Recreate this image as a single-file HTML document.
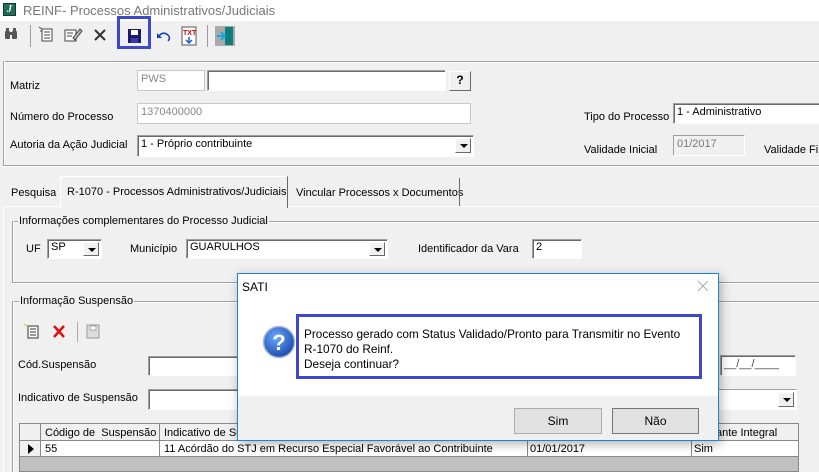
<!DOCTYPE html>
<html><head><meta charset="utf-8"><style>
*{margin:0;padding:0;box-sizing:border-box}
body{width:819px;height:472px;overflow:hidden;background:#f0f0f0;font-family:"Liberation Sans",sans-serif;font-size:11px;color:#000;position:relative}
.a{position:absolute;white-space:nowrap}
.in{position:absolute;background:#fff;border:1px solid;border-color:#a0a0a0 #fff #fff #a0a0a0;box-shadow:inset 1px 1px 0 #696969;padding:1px 3px;font-size:11px;line-height:15px}
.dd{position:absolute;right:2px;top:2px;width:16px;height:15px;background:#f0f0f0;border:1px solid;border-color:#fff #696969 #696969 #fff}
.dd:after{content:"";position:absolute;left:4px;top:5px;border:4px solid transparent;border-top:4px solid #000;border-bottom:0}
.hl{position:absolute;height:2px;border-top:1px solid #a0a0a0;border-bottom:1px solid #fff}
.vl{position:absolute;width:2px;border-left:1px solid #a0a0a0;border-right:1px solid #fff}
.btn{position:absolute;background:#e1e1e1;border:1px solid #adadad;text-align:center;font-size:12px}
</style></head><body>
<div class="a" style="left:0;top:0;width:819px;height:21px;background:#fff"></div>
<div class="a" style="left:3px;top:3px;width:13px;height:13px;background:#1f6e5a;border:1px solid #0c3d30;color:#fff;font:bold italic 10px 'Liberation Serif';text-align:center;line-height:11px">J</div>
<div class="a" style="left:23px;top:3px;font-size:13px;color:#777">REINF- Processos Administrativos/Judiciais</div>

<!-- toolbar -->
<svg class="a" style="left:0;top:22px" width="250" height="30">
<g fill="#555"><rect x="5" y="9" width="5" height="8" rx="1"/><rect x="12" y="9" width="5" height="8" rx="1"/><rect x="6" y="6" width="3" height="4"/><rect x="13" y="6" width="3" height="4"/><rect x="9" y="10" width="4" height="3"/></g>
<line x1="30.5" y1="3" x2="30.5" y2="25" stroke="#999"/>
<g fill="none" stroke="#444"><rect x="42" y="7" width="10" height="12" fill="#fff"/><path d="M44 10h6M44 13h6M44 16h6"/><path d="M39 5l3 2M40 9h2"/></g>
<g fill="none" stroke="#444"><rect x="65" y="8" width="11" height="11" fill="#fff"/><path d="M67 11h6M67 14h5"/><path d="M73 16l7-9 2 2-7 9z" fill="#bbb"/></g>
<path d="M95 8l10 10M105 8l-10 10" stroke="#333" stroke-width="2"/>
<rect x="128" y="7" width="13" height="14" fill="#1a1a6e"/><rect x="131" y="8" width="7" height="5" fill="#fff"/><rect x="131" y="16" width="7" height="5" fill="#3a3aaa"/>
<path d="M159 14q4-5 9-1 3 3 0 6" fill="none" stroke="#1540b0" stroke-width="1.5"/><path d="M157 11v5h5z" fill="#1540b0"/>
<rect x="182" y="5" width="14" height="18" fill="#fff" stroke="#555"/><text x="183" y="13" font-size="7" font-weight="bold" fill="#c00" font-family="Liberation Sans">TXT</text><path d="M189 15v5M186 18l3 3 3-3" stroke="#1a5fd0" fill="none" stroke-width="1.5"/>
<line x1="207.5" y1="3" x2="207.5" y2="25" stroke="#999"/>
<rect x="215" y="4" width="20" height="20" fill="#aaa"/><rect x="225" y="5" width="8" height="18" fill="#0a7f7f"/><path d="M217 14h7M221 10l4 4-4 4" stroke="#1ad" fill="none" stroke-width="2"/>
</svg>
<div class="a" style="left:117px;top:16px;width:34px;height:33px;border:3px solid #3f48cc"></div>

<!-- top panel -->
<div class="hl" style="left:3px;top:61px;width:816px"></div>
<div class="vl" style="left:3px;top:61px;height:106px"></div>
<div class="hl" style="left:3px;top:165px;width:816px"></div>
<div class="a" style="left:10px;top:80px">Matriz</div>
<div class="in" style="left:137px;top:70px;width:68px;height:21px;color:#888;box-shadow:none;border-color:#c8c8c8">PWS</div>
<div class="in" style="left:207px;top:70px;width:239px;height:21px"></div>
<div class="btn" style="left:449px;top:71px;width:22px;height:20px;font-weight:bold;background:#f0f0f0;border-color:#fff #696969 #696969 #fff;line-height:17px">?</div>
<div class="a" style="left:10px;top:111px">Número do Processo</div>
<div class="in" style="left:137px;top:103px;width:334px;height:21px;color:#888;box-shadow:none;border-color:#c8c8c8">1370400000</div>
<div class="a" style="left:10px;top:139px">Autoria da Ação Judicial</div>
<div class="in" style="left:137px;top:135px;width:337px;height:22px">1 - Próprio contribuinte<div class="dd"></div></div>
<div class="a" style="left:584px;top:111px">Tipo do Processo</div>
<div class="in" style="left:673px;top:103px;width:150px;height:21px">1 - Administrativo</div>
<div class="a" style="left:584px;top:144px">Validade Inicial</div>
<div class="in" style="left:673px;top:135px;width:72px;height:21px;background:#f0f0f0;color:#777;box-shadow:none;border-color:#a0a0a0 #fff #fff #a0a0a0">01/2017</div>
<div class="a" style="left:764px;top:144px">Validade Fin</div>

<!-- tabs -->
<div class="a" style="left:11px;top:187px">Pesquisa</div>
<div class="a" style="left:60px;top:176px;width:228px;height:32px;border-left:1px solid #fff;border-top:1px solid #fff;border-right:1px solid #696969;background:#f0f0f0"></div>
<div class="a" style="left:67px;top:186px">R-1070 - Processos Administrativos/Judiciais</div>
<div class="a" style="left:296px;top:187px">Vincular Processos x Documentos</div>
<div class="a" style="left:459px;top:178px;width:1px;height:28px;background:#696969"></div>
<div class="a" style="left:3px;top:206px;width:57px;height:1px;background:#fff"></div>
<div class="a" style="left:288px;top:206px;width:531px;height:1px;background:#fff"></div>
<div class="a" style="left:3px;top:206px;width:1px;height:266px;background:#fff"></div>

<!-- group 1 -->
<div class="hl" style="left:12px;top:221px;width:807px"></div>
<div class="vl" style="left:12px;top:221px;height:62px"></div>
<div class="hl" style="left:12px;top:282px;width:807px"></div>
<div class="a" style="left:18px;top:215px;background:#f0f0f0;padding:0 1px">Informações complementares do Processo Judicial</div>
<div class="a" style="left:26px;top:243px">UF</div>
<div class="in" style="left:47px;top:239px;width:55px;height:20px;padding-top:0">SP<div class="dd" style="height:14px"></div></div>
<div class="a" style="left:130px;top:243px">Município</div>
<div class="in" style="left:186px;top:239px;width:202px;height:20px;padding-top:0">GUARULHOS<div class="dd" style="height:14px"></div></div>
<div class="a" style="left:418px;top:243px">Identificador da Vara</div>
<div class="in" style="left:532px;top:239px;width:50px;height:20px;padding-top:0">2</div>

<!-- group 2 -->
<div class="hl" style="left:12px;top:301px;width:807px"></div>
<div class="vl" style="left:12px;top:301px;height:171px"></div>
<div class="a" style="left:19px;top:295px;background:#f0f0f0;padding:0 1px">Informação Suspensão</div>
<svg class="a" style="left:20px;top:320px" width="90" height="24">
<g fill="none" stroke="#333"><rect x="8" y="6" width="10" height="12" fill="#fff"/><path d="M10 9h6M10 12h6M10 15h6"/></g><path d="M4 4l4 3" stroke="#cc0"/>
<path d="M34 6l10 11M44 6l-10 11" stroke="#e01010" stroke-width="2.5"/>
<line x1="57.5" y1="2" x2="57.5" y2="22" stroke="#aaa"/>
<rect x="67" y="5" width="12" height="13" fill="#ddd" stroke="#999"/><rect x="70" y="6" width="6" height="4" fill="#fff" stroke="#aaa"/>
</svg>
<div class="a" style="left:18px;top:359px">Cód.Suspensão</div>
<div class="in" style="left:148px;top:356px;width:100px;height:20px"></div>
<div class="in" style="left:720px;top:355px;width:76px;height:21px;color:#444">__/__/____</div>
<div class="a" style="left:18px;top:392px">Indicativo de Suspensão</div>
<div class="in" style="left:148px;top:389px;width:100px;height:21px"></div>
<div class="in" style="left:700px;top:389px;width:97px;height:21px;border-left:0;box-shadow:none"><div class="dd"></div></div>

<!-- grid -->
<div class="a" style="left:19px;top:423px;width:780px;height:49px;background:#c0c0c0;border:1px solid #888"></div>
<div class="a" style="left:20px;top:424px;width:778px;height:17px;background:#f0f0f0;border-bottom:1px solid #888"></div>
<div class="a" style="left:40px;top:441px;width:758px;height:16px;background:#fff;border-bottom:1px solid #888"></div>
<div class="a" style="left:20px;top:441px;width:20px;height:16px;background:#f0f0f0;border-bottom:1px solid #888"></div>
<div class="a" style="left:40px;top:424px;width:1px;height:33px;background:#888"></div>
<div class="a" style="left:159px;top:424px;width:1px;height:33px;background:#888"></div>
<div class="a" style="left:527px;top:441px;width:1px;height:16px;background:#888"></div>
<div class="a" style="left:691px;top:424px;width:1px;height:33px;background:#888"></div>
<div class="a" style="left:28px;top:444px;border:5px solid transparent;border-left:6px solid #000;border-right:0"></div>
<div class="a" style="left:45px;top:427px">Código de &nbsp;Suspensão</div>
<div class="a" style="left:164px;top:427px">Indicativo de Su</div>
<div class="a" style="left:45px;top:443px">55</div>
<div class="a" style="left:164px;top:443px">11 Acórdão do STJ em Recurso Especial Favorável ao Contribuinte</div>
<div class="a" style="left:530px;top:443px">01/01/2017</div>
<div class="a" style="left:716px;top:427px">ante Integral</div>
<div class="a" style="left:694px;top:443px">Sim</div>

<!-- dialog -->
<div class="a" style="left:237px;top:273px;width:482px;height:168px;background:#fff;border:1px solid #1883d7;box-shadow:2px 3px 10px rgba(0,0,0,.3);font-size:12px">
 <div class="a" style="left:4px;top:6px">SATI</div>
 <svg class="a" style="left:459px;top:6px" width="12" height="12"><path d="M1 1l10 10M11 1l-10 10" stroke="#aaa"/></svg>
 <div class="a" style="left:0;top:122px;width:480px;height:44px;background:#f0f0f0"></div>
 <svg class="a" style="left:24px;top:51px" width="34" height="34"><defs><radialGradient id="g" cx=".4" cy=".35" r=".7"><stop offset="0" stop-color="#6aa8ff"/><stop offset="1" stop-color="#1747a8"/></radialGradient></defs><circle cx="17" cy="17" r="15.5" fill="url(#g)" stroke="#a8b8d0" stroke-width="1.5"/><text x="17" y="25" text-anchor="middle" font-size="22" font-weight="bold" fill="#fff" font-family="Liberation Sans">?</text></svg>
 <div class="a" style="left:58px;top:40px;width:406px;height:65px;border:3px solid #3f48cc"></div>
 <div class="a" style="left:66px;top:53px;line-height:15px;font-size:11.8px">Processo gerado com Status Validado/Pronto para Transmitir no Evento<br>R-1070 do Reinf.<br>Deseja continuar?</div>
 <div class="btn" style="left:276px;top:134px;width:88px;height:26px;line-height:24px">Sim</div>
 <div class="btn" style="left:374px;top:134px;width:87px;height:26px;line-height:24px;border-color:#777">Não</div>
</div>
</body></html>
